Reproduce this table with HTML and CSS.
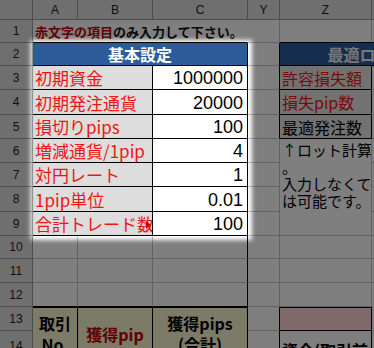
FILE: index.html
```html
<!DOCTYPE html>
<html lang="ja">
<head>
    <meta charset="UTF-8">
    <meta name="viewport" content="width=device-width, initial-scale=1.0">
    <title>ロット計算シート</title>
    <link rel="stylesheet" href="styles.css">
</head>
<body>
    <div class="sheet">
        <!-- column headers -->
        <div class="corner"></div>
        <div class="colhead">A</div>
        <div class="colhead">B</div>
        <div class="colhead">C</div>
        <div class="colhead">Y</div>
        <div class="colhead">Z</div>
        <div class="colhead"></div>

        <!-- row 1 -->
        <div class="rowhead">1</div>
        <div class="cell note wide3"><span class="dark-red">赤文字の項目</span>のみ入力して下さい。</div>
        <div class="cell"></div>
        <div class="cell"></div>
        <div class="cell"></div>

        <!-- row 2 -->
        <div class="rowhead">2</div>
        <div class="cell title wide3">基本設定</div>
        <div class="cell edge"></div>
        <div class="cell title title-z wide2">最適ロット計算</div>

        <!-- row 3 -->
        <div class="rowhead">3</div>
        <div class="cell label wide2">初期資金</div>
        <div class="cell num">1000000</div>
        <div class="cell edge"></div>
        <div class="cell zlabel red">許容損失額</div>
        <div class="cell"></div>

        <!-- row 4 -->
        <div class="rowhead">4</div>
        <div class="cell label wide2">初期発注通貨</div>
        <div class="cell num">20000</div>
        <div class="cell edge"></div>
        <div class="cell zlabel red">損失pip数</div>
        <div class="cell"></div>

        <!-- row 5 -->
        <div class="rowhead">5</div>
        <div class="cell label wide2">損切りpips</div>
        <div class="cell num">100</div>
        <div class="cell edge"></div>
        <div class="cell zlabel">最適発注数</div>
        <div class="cell"></div>

        <!-- row 6 -->
        <div class="rowhead">6</div>
        <div class="cell label wide2">増減通貨/1pip</div>
        <div class="cell num">4</div>
        <div class="cell"></div>
        <div class="cell memo tall4">
            <div class="memo-line">↑ロット計算用</div>
            <div class="memo-line">。</div>
            <div class="memo-line">入力しなくて</div>
            <div class="memo-line">は可能です。</div>
        </div>
        <div class="cell"></div>

        <!-- row 7 -->
        <div class="rowhead">7</div>
        <div class="cell label wide2">対円レート</div>
        <div class="cell num">1</div>
        <div class="cell"></div>
        <div class="cell"></div>

        <!-- row 8 -->
        <div class="rowhead">8</div>
        <div class="cell label wide2">1pip単位</div>
        <div class="cell num">0.01</div>
        <div class="cell"></div>
        <div class="cell"></div>

        <!-- row 9 -->
        <div class="rowhead">9</div>
        <div class="cell label clipped wide2">合計トレード数<span class="more"></span></div>
        <div class="cell num">100</div>
        <div class="cell"></div>
        <div class="cell"></div>

        <!-- rows 10 - 12 -->
        <div class="rowhead">10</div>
        <div class="cell"></div>
        <div class="cell"></div>
        <div class="cell right-edge"></div>
        <div class="cell"></div>
        <div class="cell"></div>
        <div class="cell"></div>

        <div class="rowhead">11</div>
        <div class="cell"></div>
        <div class="cell"></div>
        <div class="cell right-edge"></div>
        <div class="cell"></div>
        <div class="cell"></div>
        <div class="cell"></div>

        <div class="rowhead">12</div>
        <div class="cell above"></div>
        <div class="cell above"></div>
        <div class="cell above right-edge"></div>
        <div class="cell"></div>
        <div class="cell"></div>
        <div class="cell"></div>

        <!-- rows 13 - 14 : trade table header -->
        <div class="rowhead">13</div>
        <div class="cell thead tall2">取引<br>No.</div>
        <div class="cell thead tall2 dark-red">獲得pip</div>
        <div class="cell thead tall2 right-edge">獲得pips<br>(合計)</div>
        <div class="cell edge"></div>
        <div class="cell pink"></div>
        <div class="cell"></div>

        <div class="rowhead">14</div>
        <div class="cell edge"></div>
        <div class="cell zhead">資金(取引前</div>
        <div class="cell"></div>
    </div>

    <!-- dims everything except the settings block -->
    <div class="spot"></div>
</body>
</html>
```

FILE: styles.css
```css
body {
    margin: 0;
    padding: 0;
    overflow: hidden;
    background-color: #fff;
    font-family: "Noto Sans CJK JP", "Liberation Sans", sans-serif;
}

.sheet {
    display: grid;
    grid-template-columns: 33px 45px 75px 95px 32px 92px 116px;
    grid-template-rows: 20px 23px 23px 24px 25px 24px 24px 24px 25px 24px 23px 24px 24px 24px 30px;
    width: 488px;
}

.sheet > div {
    box-sizing: border-box;
    overflow: hidden;
    white-space: nowrap;
}

.corner,
.colhead,
.rowhead {
    background-color: #dfdfdf;
    border-right: 1px solid #9a9a9a;
    border-bottom: 1px solid #9a9a9a;
    color: #222;
    font-family: "Liberation Sans", sans-serif;
    font-size: 12px;
    display: flex;
    align-items: center;
    justify-content: center;
}

.cell {
    border-right: 1px solid #c4c4c4;
    border-bottom: 1px solid #c4c4c4;
    display: flex;
    align-items: center;
}

.wide2 { grid-column: span 2; }
.wide3 { grid-column: span 3; }
.tall2 { grid-row: span 2; }
.tall4 { grid-row: span 4; }

.red { color: #f01414; }
.dark-red { color: #c00000; }

/* row 1 */
.note {
    font-size: 13px;
    font-weight: bold;
    color: #111;
    padding-left: 2px;
    border-right-color: transparent;
    border-bottom-color: #000;
}

/* blue headings */
.title {
    background-color: #2c5d9a;
    color: #fff;
    font-size: 16px;
    font-weight: bold;
    justify-content: center;
    border-right-color: #000;
    border-bottom-color: #000;
}

.title-z {
    border-top: 1px solid #000;
    margin-top: -1px;
    color: #eee;
}

/* settings block */
.label {
    background-color: #dddddd;
    color: #f01414;
    font-size: 17px;
    padding-left: 2px;
    border-right-color: #000;
    border-bottom-color: #000;
}

.clipped {
    position: relative;
}

.more {
    position: absolute;
    right: 1px;
    top: 9px;
    border-left: 5px solid #d00000;
    border-top: 4px solid transparent;
    border-bottom: 4px solid transparent;
}

.num {
    background-color: #fff;
    color: #000;
    font-family: "Liberation Sans", sans-serif;
    font-size: 18px;
    justify-content: flex-end;
    padding-right: 4px;
    padding-top: 2px;
    border-right-color: #000;
    border-bottom-color: #000;
}

.edge { border-right-color: #000; }
.right-edge { border-right-color: #000; }
.above { border-bottom-color: #000; }

/* column Z */
.zlabel {
    background-color: #e4e4e4;
    font-size: 16px;
    padding-left: 2px;
    border-right-color: #000;
    border-bottom-color: #000;
}

.memo {
    flex-direction: column;
    align-items: flex-start;
    justify-content: flex-start;
    font-size: 15px;
    color: #000;
    padding: 2px 0 0 2px;
}

.memo-line {
    height: 17px;
    line-height: 17px;
}

/* trade table header */
.thead {
    background-color: #f6f6ce;
    border-top: 1px solid #000;
    border-right-color: #000;
    border-bottom-color: #000;
    justify-content: center;
    text-align: center;
    font-size: 16px;
    font-weight: bold;
    line-height: 21px;
    white-space: normal;
}

.pink {
    background-color: #ffd6d6;
    border-top: 1px solid #000;
    border-right-color: #000;
    border-bottom-color: #000;
}

.zhead {
    font-size: 16px;
    font-weight: bold;
    padding-left: 2px;
    padding-top: 8px;
    border-right-color: #000;
}

/* spotlight: a blurred hole in a dark veil */
.spot {
    position: absolute;
    left: 30px;
    top: 40px;
    width: 222px;
    height: 200px;
    box-shadow: 0 0 0 1000px rgba(0, 0, 0, 0.5);
    filter: blur(2px);
    pointer-events: none;
}
```
